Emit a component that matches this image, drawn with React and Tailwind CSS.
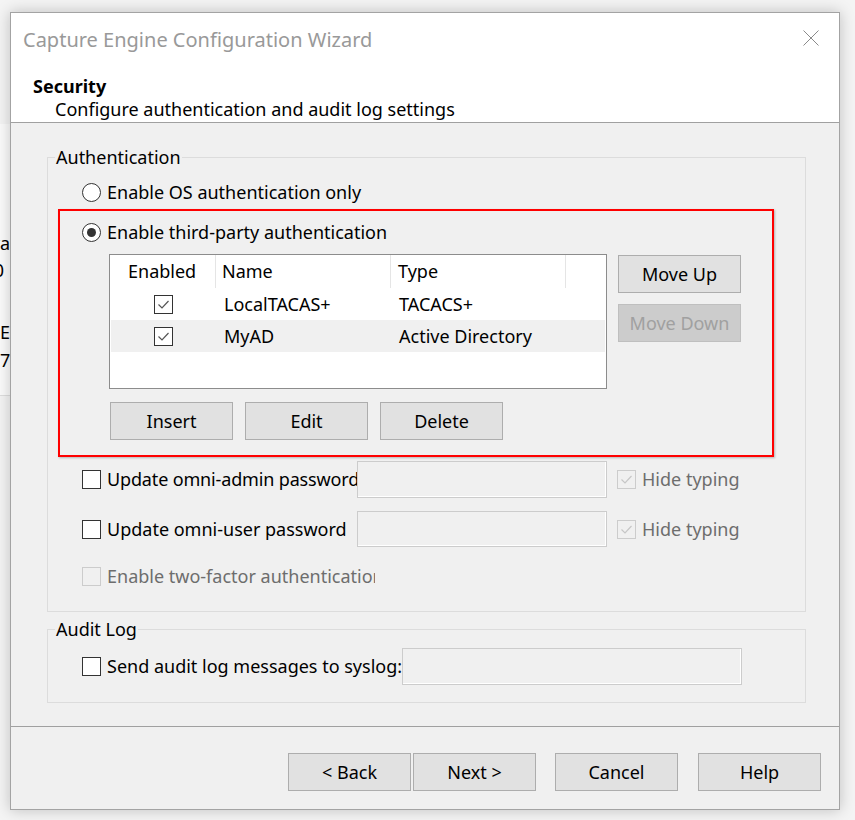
import React from "react";

function Radio({ checked }) {
  return (
    <span className="w-[19px] h-[19px] rounded-full border border-[#333333] bg-white flex items-center justify-center shrink-0">
      {checked && <span className="w-[9px] h-[9px] rounded-full bg-[#333333]" />}
    </span>
  );
}

function CheckMark({ color }) {
  return (
    <svg width="17" height="17" viewBox="0 0 17 17" fill="none">
      <path d="M3.5 8.5 L7 12 L13.5 5" stroke={color} strokeWidth="1.2" />
    </svg>
  );
}

function Check({ checked, disabled }) {
  return (
    <span
      className={
        disabled
          ? "w-[19px] h-[19px] border border-[#cccccc] bg-[#f0f0f0] flex items-center justify-center shrink-0"
          : "w-[19px] h-[19px] border border-[#333333] bg-white flex items-center justify-center shrink-0"
      }
    >
      {checked && <CheckMark color={disabled ? "#c6c6c6" : "#555555"} />}
    </span>
  );
}

function Btn({ children, disabled }) {
  return (
    <div
      className={
        disabled
          ? "w-[123px] h-[38px] shrink-0 border border-[#bfbfbf] bg-[#cccccc] text-[#a0a0a0] flex items-center justify-center"
          : "w-[123px] h-[38px] shrink-0 border border-[#adadad] bg-[#e1e1e1] flex items-center justify-center"
      }
    >
      {children}
    </div>
  );
}

function Field({ className }) {
  return (
    <div
      className={
        "shrink-0 border border-[#cccccc] bg-[#f0f0f0] shadow-[inset_-1px_-1px_0_#ffffff] " +
        className
      }
    />
  );
}

export default function App() {
  return (
    <div className="relative w-[855px] h-[820px] overflow-hidden bg-[#f4f4f4] font-['Noto_Sans',sans-serif] text-[18px] text-black">
      {/* background window fragment */}
      <div className="absolute left-0 top-[124px] w-[10px] h-[272px] bg-[#fbfbfb] border-b border-[#dedede] overflow-hidden leading-[24px]">
        <span className="absolute right-0 top-[107px] whitespace-nowrap">va</span>
        <span className="absolute right-[6px] top-[134px] whitespace-nowrap">0</span>
        <span className="absolute left-0 top-[196px] whitespace-nowrap">E</span>
        <span className="absolute left-0 top-[224px] whitespace-nowrap">7</span>
      </div>

      {/* dialog */}
      <div className="absolute left-[10px] top-[12px] w-[830px] h-[798px] border border-[#a3a3a3] bg-[#f0f0f0] shadow-[0_0_14px_rgba(0,0,0,0.22)] flex flex-col">
        {/* header */}
        <div className="h-[109px] bg-white flex flex-col">
          <div className="mt-[13px] h-[28px] pl-[12px] pr-[20px] flex items-center justify-between">
            <span className="text-[20px] leading-[28px] text-[#999999]">
              Capture Engine Configuration Wizard
            </span>
            <svg width="16" height="16" viewBox="0 0 16 16" className="mb-[4px]">
              <path d="M0.5 0.5 L15.5 15.5 M15.5 0.5 L0.5 15.5" stroke="#8a8a8a" strokeWidth="1" />
            </svg>
          </div>
          <div className="mt-[20px] pl-[22px] h-[24px] leading-[24px] font-bold">Security</div>
          <div className="pl-[44px] h-[23px] leading-[23px]">
            Configure authentication and audit log settings
          </div>
        </div>
        <div className="h-px bg-[#a0a0a0]" />

        {/* body */}
        <div className="h-[603px] pt-[22px] pl-[36px]">
          <fieldset className="w-[759px] border border-[#dcdcdc] pb-[23px]">
            <legend className="ml-[7px] px-[1px] leading-[24px]">Authentication</legend>
            <div className="mt-[11px] ml-[34px] h-[24px] flex items-center gap-[6px]">
              <Radio />
              <span>Enable OS authentication only</span>
            </div>

            <div className="mt-[5px] ml-[10px] w-[716px] border-2 border-[#ff0000] pt-[9px] pb-[15px] shadow-[1px_1px_2px_rgba(0,0,0,0.25)]">
              <div className="ml-[22px] h-[24px] flex items-center gap-[6px]">
                <Radio checked />
                <span>Enable third-party authentication</span>
              </div>
              <div className="mt-[10px] ml-[49px] flex gap-[11px]">
                <div className="w-[498px] h-[135px] shrink-0 border border-[#8c8c8c] bg-white">
                  <div className="h-[33px] flex">
                    <div className="w-[106px] border-r border-[#e5e5e5] pl-[18px] flex items-center">Enabled</div>
                    <div className="w-[175px] border-r border-[#e5e5e5] pl-[6px] flex items-center">Name</div>
                    <div className="w-[175px] border-r border-[#e5e5e5] pl-[7px] flex items-center">Type</div>
                  </div>
                  <div className="h-[32px] flex items-center">
                    <div className="w-[106px] flex justify-center pl-[1px]">
                      <Check checked />
                    </div>
                    <div className="w-[175px] pl-[8px]">LocalTACAS+</div>
                    <div className="w-[175px] pl-[8px]">TACACS+</div>
                  </div>
                  <div className="h-[32px] mx-[1px] bg-[#f0f0f0] flex items-center">
                    <div className="w-[105px] flex justify-center">
                      <Check checked />
                    </div>
                    <div className="w-[175px] pl-[8px]">MyAD</div>
                    <div className="w-[175px] pl-[8px]">Active Directory</div>
                  </div>
                </div>
                <div className="mt-[1px] flex flex-col gap-[11px]">
                  <Btn>Move Up</Btn>
                  <Btn disabled>Move Down</Btn>
                </div>
              </div>
              <div className="mt-[13px] ml-[50px] flex gap-[12px]">
                <Btn>Insert</Btn>
                <Btn>Edit</Btn>
                <Btn>Delete</Btn>
              </div>
            </div>

            <div className="mt-[4px] ml-[34px] flex items-center">
              <div className="w-[275px] shrink-0 flex items-center gap-[6px]">
                <Check />
                <span className="whitespace-nowrap tracking-[-0.15px]">Update omni-admin password</span>
              </div>
              <Field className="w-[250px] h-[37px]" />
              <div className="ml-[10px] flex items-center gap-[6px] text-[#6d6d6d]">
                <Check checked disabled />
                <span>Hide typing</span>
              </div>
            </div>
            <div className="mt-[13px] ml-[34px] flex items-center">
              <div className="w-[275px] shrink-0 flex items-center gap-[6px]">
                <Check />
                <span className="whitespace-nowrap">Update omni-user password</span>
              </div>
              <Field className="w-[250px] h-[36px]" />
              <div className="ml-[10px] flex items-center gap-[6px] text-[#6d6d6d]">
                <Check checked disabled />
                <span>Hide typing</span>
              </div>
            </div>
            <div className="mt-[17px] ml-[34px] h-[24px] flex items-center gap-[6px] text-[#6d6d6d]">
              <Check disabled />
              <span className="w-[268px] overflow-hidden whitespace-nowrap">
                Enable two-factor authentication
              </span>
            </div>
          </fieldset>

          <fieldset className="mt-[5px] w-[759px] border border-[#dcdcdc] pb-[17px]">
            <legend className="ml-[7px] px-[1px] leading-[24px]">Audit Log</legend>
            <div className="mt-[7px] ml-[34px] flex items-center">
              <div className="w-[320px] shrink-0 flex items-center gap-[6px]">
                <Check />
                <span className="whitespace-nowrap">Send audit log messages to syslog:</span>
              </div>
              <Field className="w-[340px] h-[37px]" />
            </div>
          </fieldset>
        </div>
        <div className="h-px bg-[#a0a0a0]" />

        {/* footer */}
        <div className="flex-1 pt-[26px] pr-[18px] flex justify-end items-start">
          <Btn>&lt; Back</Btn>
          <div className="ml-[2px]">
            <Btn>Next &gt;</Btn>
          </div>
          <div className="ml-[19px]">
            <Btn>Cancel</Btn>
          </div>
          <div className="ml-[20px]">
            <Btn>Help</Btn>
          </div>
        </div>
      </div>
    </div>
  );
}
